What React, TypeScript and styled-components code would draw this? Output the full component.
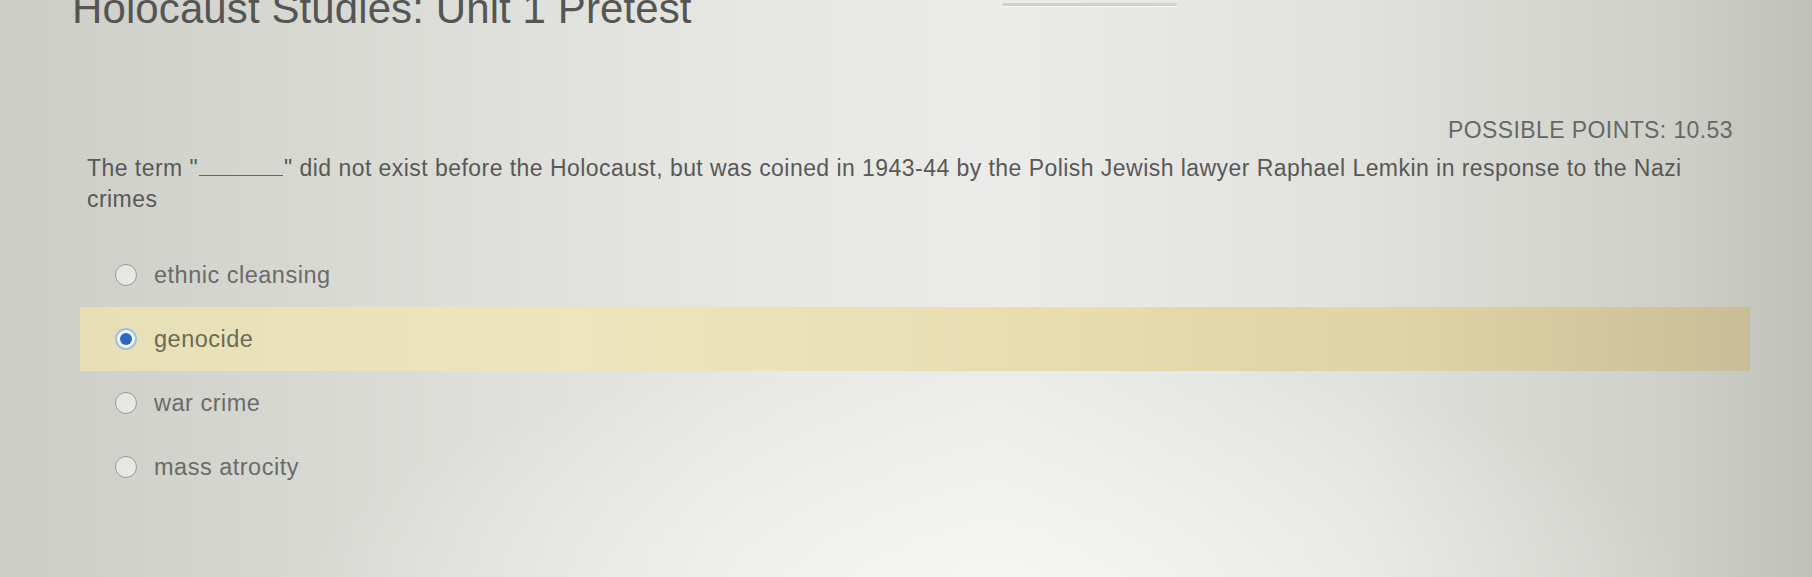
import React from "react";
import styled, { createGlobalStyle } from "styled-components";

const Global = createGlobalStyle`
  html, body {
    margin: 0;
    padding: 0;
    width: 1812px;
    height: 577px;
    overflow: hidden;
  }
  body {
    font-family: "Liberation Sans", Arial, Helvetica, sans-serif;
  }
`;

const Page = styled.div`
  box-sizing: border-box;
  width: 1812px;
  height: 577px;
  overflow: hidden;
  padding: 0 62px 0 80px;
  background:
    radial-gradient(ellipse 700px 260px at 55% 105%, rgba(250, 250, 248, 0.75), rgba(250, 250, 248, 0) 100%),
    linear-gradient(90deg, #cccdc6 0%, #d9d9d4 18%, #e6e6e3 40%, #ebebe9 55%, #e1e1dd 75%, #cfd0c9 92%, #bfc0b8 100%);
`;

const Header = styled.header`
  display: flex;
  align-items: flex-start;
  margin-top: -12px;
  height: 42px;
`;

const Title = styled.h1`
  margin: 0 0 0 -8px;
  font-size: 42px;
  line-height: 42px;
  font-weight: 400;
  color: #555654;
  white-space: nowrap;
  letter-spacing: 0.1px;
`;

const TabLine = styled.div`
  margin: 15px 0 0 310px;
  width: 175px;
  height: 3px;
  border-radius: 2px;
  background: #cfd0ca;
  box-shadow: 0 1px 1px rgba(255, 255, 255, 0.7);
`;

const Points = styled.div`
  margin-top: 87px;
  padding-right: 17px;
  text-align: right;
  font-size: 23px;
  line-height: 26px;
  color: #676866;
  letter-spacing: 0.4px;
`;

const Question = styled.p`
  margin: 10px 0 0;
  padding-left: 7px;
  font-size: 23px;
  line-height: 31px;
  letter-spacing: 0.45px;
  color: #585957;
`;

const Blank = styled.span`
  display: inline-block;
  width: 84px;
  border-bottom: 1.5px solid #666;
  margin: 0 1px;
  vertical-align: baseline;
  height: 18px;
`;

const Options = styled.div`
  display: flex;
  flex-direction: column;
  margin-top: 28px;
`;

const Option = styled.label<{ $selected?: boolean }>`
  display: flex;
  align-items: center;
  gap: 17px;
  height: 64px;
  padding-left: 35px;
  font-size: 23.5px;
  letter-spacing: 0.5px;
  color: ${(p) => (p.$selected ? "#6b6a55" : "#6a6b69")};
  background: ${(p) =>
    p.$selected
      ? "linear-gradient(90deg, #e8dfb7 0%, #ece5bd 30%, #e9deb2 55%, #dfd2a4 80%, #c9bd98 100%)"
      : "transparent"};
`;

const Radio = styled.span<{ $checked?: boolean }>`
  box-sizing: border-box;
  width: 22px;
  height: 22px;
  border-radius: 50%;
  flex: none;
  display: flex;
  align-items: center;
  justify-content: center;
  border: ${(p) => (p.$checked ? "2px solid #9fc0e6" : "1.5px solid #9a9b98")};
  background: ${(p) => (p.$checked ? "#f4f6f8" : "rgba(245, 245, 243, 0.6)")};

  &::after {
    content: "";
    display: ${(p) => (p.$checked ? "block" : "none")};
    width: 12px;
    height: 12px;
    border-radius: 50%;
    background: #2a68c4;
  }
`;

const options = ["ethnic cleansing", "genocide", "war crime", "mass atrocity"];

export default function App() {
  return (
    <>
      <Global />
      <Page>
        <Header>
          <Title>Holocaust Studies: Unit 1 Pretest</Title>
          <TabLine />
        </Header>
        <Points>POSSIBLE POINTS: 10.53</Points>
        <Question>
          The term "<Blank />" did not exist before the Holocaust, but was coined in 1943-44 by the Polish
          Jewish lawyer Raphael Lemkin in response to the Nazi
          <br />
          crimes
        </Question>
        <Options>
          {options.map((o) => (
            <Option key={o} $selected={o === "genocide"}>
              <Radio $checked={o === "genocide"} />
              {o}
            </Option>
          ))}
        </Options>
      </Page>
    </>
  );
}
